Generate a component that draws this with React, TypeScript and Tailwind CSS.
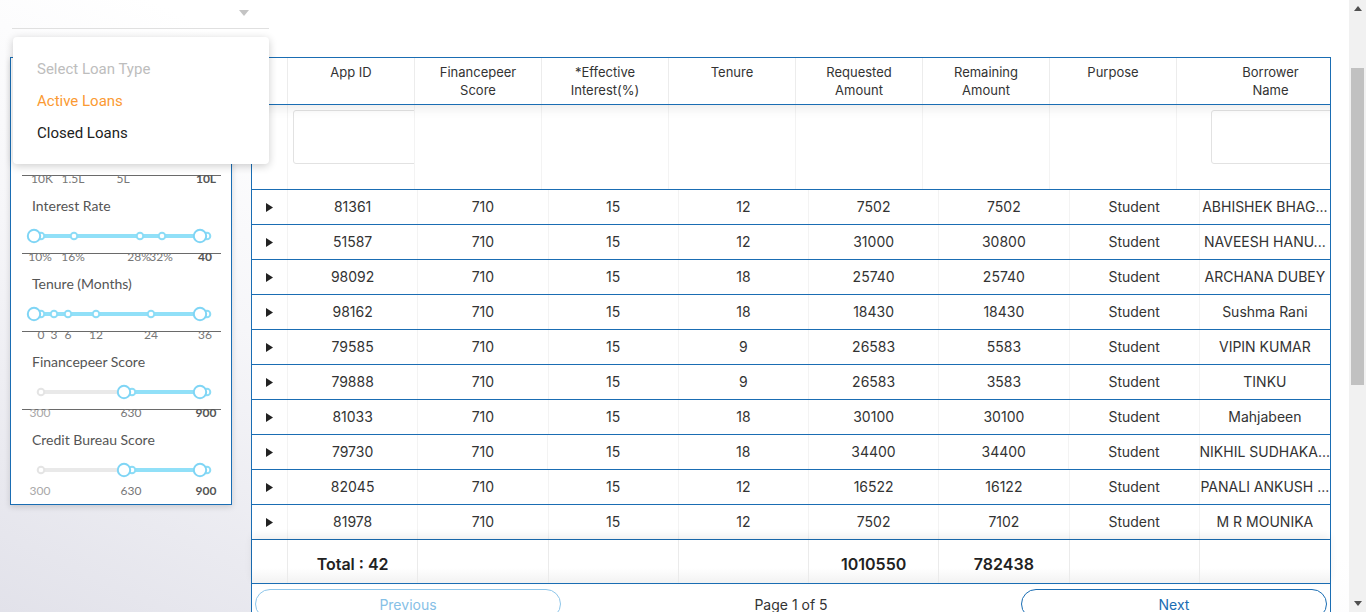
import React from 'react'

const BLUE = '#1a6db3'

type Mark = { t: string; x: number; bold?: boolean; dim?: boolean }

type FilterSection = {
  label: string
  handles: [number, number]
  dots: number[]
  grey?: number
  marks: Mark[]
  line?: boolean
  hidden?: boolean
}

const SECTIONS: FilterSection[] = [
  {
    label: '',
    handles: [34, 200],
    dots: [41, 73, 123, 207],
    marks: [
      { t: '10K', x: 42 },
      { t: '1.5L', x: 73 },
      { t: '5L', x: 123 },
      { t: '10L', x: 206, bold: true },
    ],
    line: true,
    hidden: true,
  },
  {
    label: 'Interest Rate',
    handles: [34, 200],
    dots: [41, 74, 140, 162, 207],
    marks: [
      { t: '10%', x: 40 },
      { t: '16%', x: 73 },
      { t: '28%', x: 139 },
      { t: '32%', x: 161 },
      { t: '40', x: 205, bold: true },
    ],
    line: true,
  },
  {
    label: 'Tenure (Months)',
    handles: [34, 200],
    dots: [41, 54, 68, 96, 151, 207],
    marks: [
      { t: '0', x: 41 },
      { t: '3', x: 54 },
      { t: '6', x: 68 },
      { t: '12', x: 96 },
      { t: '24', x: 151 },
      { t: '36', x: 205 },
    ],
    line: true,
  },
  {
    label: 'Financepeer Score',
    handles: [124, 200],
    dots: [132, 207],
    grey: 41,
    marks: [
      { t: '300', x: 40, dim: true },
      { t: '630', x: 131 },
      { t: '900', x: 206, bold: true },
    ],
    line: true,
  },
  {
    label: 'Credit Bureau Score',
    handles: [124, 200],
    dots: [132, 207],
    grey: 41,
    marks: [
      { t: '300', x: 40, dim: true },
      { t: '630', x: 131 },
      { t: '900', x: 206, bold: true },
    ],
    line: false,
  },
]

const ROWS = [
  ['81361', '710', '15', '12', '7502', '7502', 'Student', 'ABHISHEK BHAG...'],
  ['51587', '710', '15', '12', '31000', '30800', 'Student', 'NAVEESH HANU...'],
  ['98092', '710', '15', '18', '25740', '25740', 'Student', 'ARCHANA DUBEY'],
  ['98162', '710', '15', '18', '18430', '18430', 'Student', 'Sushma Rani'],
  ['79585', '710', '15', '9', '26583', '5583', 'Student', 'VIPIN KUMAR'],
  ['79888', '710', '15', '9', '26583', '3583', 'Student', 'TINKU'],
  ['81033', '710', '15', '18', '30100', '30100', 'Student', 'Mahjabeen'],
  ['79730', '710', '15', '18', '34400', '34400', 'Student', 'NIKHIL SUDHAKA...'],
  ['82045', '710', '15', '12', '16522', '16122', 'Student', 'PANALI ANKUSH ...'],
  ['81978', '710', '15', '12', '7502', '7102', 'Student', 'M R MOUNIKA'],
]

const HEADERS = [
  ['App ID'],
  ['Financepeer', 'Score'],
  ['*Effective', 'Interest(%)'],
  ['Tenure'],
  ['Requested', 'Amount'],
  ['Remaining', 'Amount'],
  ['Purpose'],
  ['Borrower', 'Name'],
]

function Slider({ handles, dots, grey }: { handles: [number, number]; dots: number[]; grey?: number }) {
  const o = 11
  return (
    <svg width="220" height="16" className="block">
      {grey !== undefined && (
        <>
          <line x1={grey - o} x2={handles[0] - o} y1="8" y2="8" stroke="#e9e9e9" strokeWidth="4" strokeLinecap="round" />
          <circle cx={grey - o} cy="8" r="3.3" fill="#fff" stroke="#e4e4e4" strokeWidth="2" />
        </>
      )}
      <line x1={handles[0] - o} x2={handles[1] - o} y1="8" y2="8" stroke="#91e0f8" strokeWidth="4" />
      {dots.map(d => (
        <circle key={d} cx={d - o} cy="8" r="3.3" fill="#fff" stroke="#8cdcf6" strokeWidth="2" />
      ))}
      {handles.map(h => (
        <circle key={h} cx={h - o} cy="8" r="6.2" fill="#fff" stroke="#7fd5f5" strokeWidth="2" />
      ))}
    </svg>
  )
}

function Section({ s }: { s: FilterSection }) {
  return (
    <div className="h-[78px]">
      <div className="h-[22px] pl-[21px] pt-[6px] text-[14px] leading-4 text-[#555]">{s.label}</div>
      <div className="mt-[14px] h-[16px]">
        {!s.hidden && <Slider handles={s.handles} dots={s.dots} grey={s.grey} />}
      </div>
      <div className={`relative ml-[11px] mr-[10px] mt-[9px] h-[16px] border-t ${s.line ? 'border-[#6a6a6a]' : 'border-transparent'}`}>
        {s.marks.map(m => (
          <span
            key={m.t}
            className={`absolute top-[-4px] -translate-x-1/2 text-[12px] leading-[14px] ${
              m.bold ? 'font-bold text-[#555]' : m.dim ? 'text-[#a8a8a8]' : 'text-[#777]'
            }`}
            style={{ left: m.x - 22 }}
          >
            {m.t}
          </span>
        ))}
      </div>
    </div>
  )
}

function Triangle() {
  return (
    <svg width="7" height="9" viewBox="0 0 7 9">
      <path d="M0 0 L7 4.5 L0 9 Z" fill="#222" />
    </svg>
  )
}

export default function App() {
  return (
    <div className="flex h-[612px] w-full overflow-hidden">
      <main className="relative flex-1 bg-[linear-gradient(205deg,#ffffff_45%,#f6f6f9_68%,#e2e2ea_100%)]">
        {/* Loan type select */}
        <div className="relative ml-[12px] w-[257px] font-['Roboto',sans-serif]">
          <div className="flex h-[29px] items-start justify-end border-b border-[#e0e0e0] pr-[20px] pt-[10px]">
            <svg width="10" height="6" viewBox="0 0 10 6">
              <path d="M0 0 L10 0 L5 6 Z" fill="#c4c4c4" />
            </svg>
          </div>
          <div className="absolute left-[1px] top-[37px] z-30 flex h-[127px] w-[256px] flex-col rounded-[4px] bg-white pt-[23px] text-[15px] leading-[18px] shadow-[0_2px_8px_rgba(0,0,0,0.2)]">
            <div className="h-[32px] pl-[24px] text-[#bdbdbd]">Select Loan Type</div>
            <div className="h-[32px] pl-[24px] text-[#fb9a33]">Active Loans</div>
            <div className="h-[32px] pl-[24px] text-[#212121]">Closed Loans</div>
          </div>
        </div>

        <div className="mt-[28px] flex items-start">
          {/* Filters card */}
          <aside
            className="ml-[10px] w-[222px] border bg-white pt-[56px] font-['Lato',sans-serif] shadow-[0_2px_6px_rgba(0,0,0,0.15)]"
            style={{ borderColor: BLUE }}
          >
            {SECTIONS.map((s, i) => (
              <Section key={i} s={s} />
            ))}
          </aside>

          {/* Loans table */}
          <section
            className="ml-[19px] w-[1080px] border-x border-t bg-white font-['Inter',sans-serif] text-[#333]"
            style={{ borderColor: BLUE }}
          >
            <div className="overflow-hidden">
              <div
                className="relative z-10 grid h-[47px] w-[1113px] grid-cols-[36px_repeat(7,127px)_188px] border-b bg-white shadow-[0_4px_10px_rgba(0,0,0,0.08)]"
                style={{ borderColor: BLUE }}
              >
                <div className="border-r border-[#ececec]" />
                {HEADERS.map(h => (
                  <div key={h.join(' ')} className="border-r border-[#ececec] pt-[5px] text-center text-[13px] leading-[18px] text-[#333]">
                    {h.map(l => (
                      <div key={l}>{l}</div>
                    ))}
                  </div>
                ))}
              </div>
              <div
                className="grid h-[85px] w-[1113px] grid-cols-[36px_repeat(7,127px)_188px] border-b"
                style={{ borderColor: BLUE }}
              >
                <div className="border-r border-[#f3f3f3]" />
                <div className="overflow-hidden border-r border-[#f3f3f3] pl-[5px] pt-[5px]">
                  <div className="h-[54px] w-[150px] rounded-[3px] border border-[#e2e2e2]" />
                </div>
                {[0, 1, 2, 3, 4, 5].map(i => (
                  <div key={i} className="border-r border-[#f3f3f3]" />
                ))}
                <div className="overflow-hidden pl-[34px] pt-[5px]">
                  <div className="h-[54px] w-[150px] rounded-[3px] border border-[#e2e2e2]" />
                </div>
              </div>
            </div>

            {ROWS.map(r => (
              <div
                key={r[0]}
                className="grid h-[35px] grid-cols-[36px_repeat(8,1fr)] border-b text-[14px]"
                style={{ borderColor: BLUE }}
              >
                <div className="flex items-center justify-center border-r border-[#f3f3f3]">
                  <Triangle />
                </div>
                {r.map((c, i) => (
                  <div key={i} className="flex items-center justify-center whitespace-nowrap border-r border-[#f3f3f3] pb-[1px] last:border-r-0">
                    {c}
                  </div>
                ))}
              </div>
            ))}

            <div
              className="relative grid h-[44px] grid-cols-[36px_repeat(8,1fr)] border-b bg-[linear-gradient(to_bottom,#ffffff_65%,#f2f2f2)] text-[16px] font-semibold text-[#222] shadow-[0_-4px_8px_rgba(0,0,0,0.07)]"
              style={{ borderColor: BLUE }}
            >
              <div className="border-r border-[#ebebeb]" />
              {['Total : 42', '', '', '', '1010550', '782438', '', ''].map((c, i) => (
                <div key={i} className="flex items-center justify-center border-r border-[#ebebeb] pt-[4px] last:border-r-0">
                  {c}
                </div>
              ))}
            </div>

            <div className="grid grid-cols-[306px_1fr_306px] px-[3px] pt-[5px] text-[14px]">
              <button className="h-[30px] rounded-full border border-[#8ec6ea] text-[#86c0e6]">Previous</button>
              <div className="flex h-[30px] items-center justify-center text-[#333]">Page 1 of 5</div>
              <button className="h-[30px] rounded-full border text-[#1a6db3]" style={{ borderColor: BLUE }}>
                Next
              </button>
            </div>
          </section>
        </div>
      </main>

      {/* Page scrollbar */}
      <div className="flex w-[17px] flex-col items-center bg-[#f1f1f1]">
        <div className="flex h-[17px] items-center justify-center">
          <svg width="8" height="5" viewBox="0 0 8 5">
            <path d="M0 5 L8 5 L4 0 Z" fill="#505050" />
          </svg>
        </div>
        <div className="mt-[51px] h-[317px] w-[13px] bg-[#c1c1c1]" />
        <div className="flex-1" />
        <div className="flex h-[17px] items-center justify-center">
          <svg width="8" height="5" viewBox="0 0 8 5">
            <path d="M0 0 L8 0 L4 5 Z" fill="#505050" />
          </svg>
        </div>
      </div>
    </div>
  )
}
